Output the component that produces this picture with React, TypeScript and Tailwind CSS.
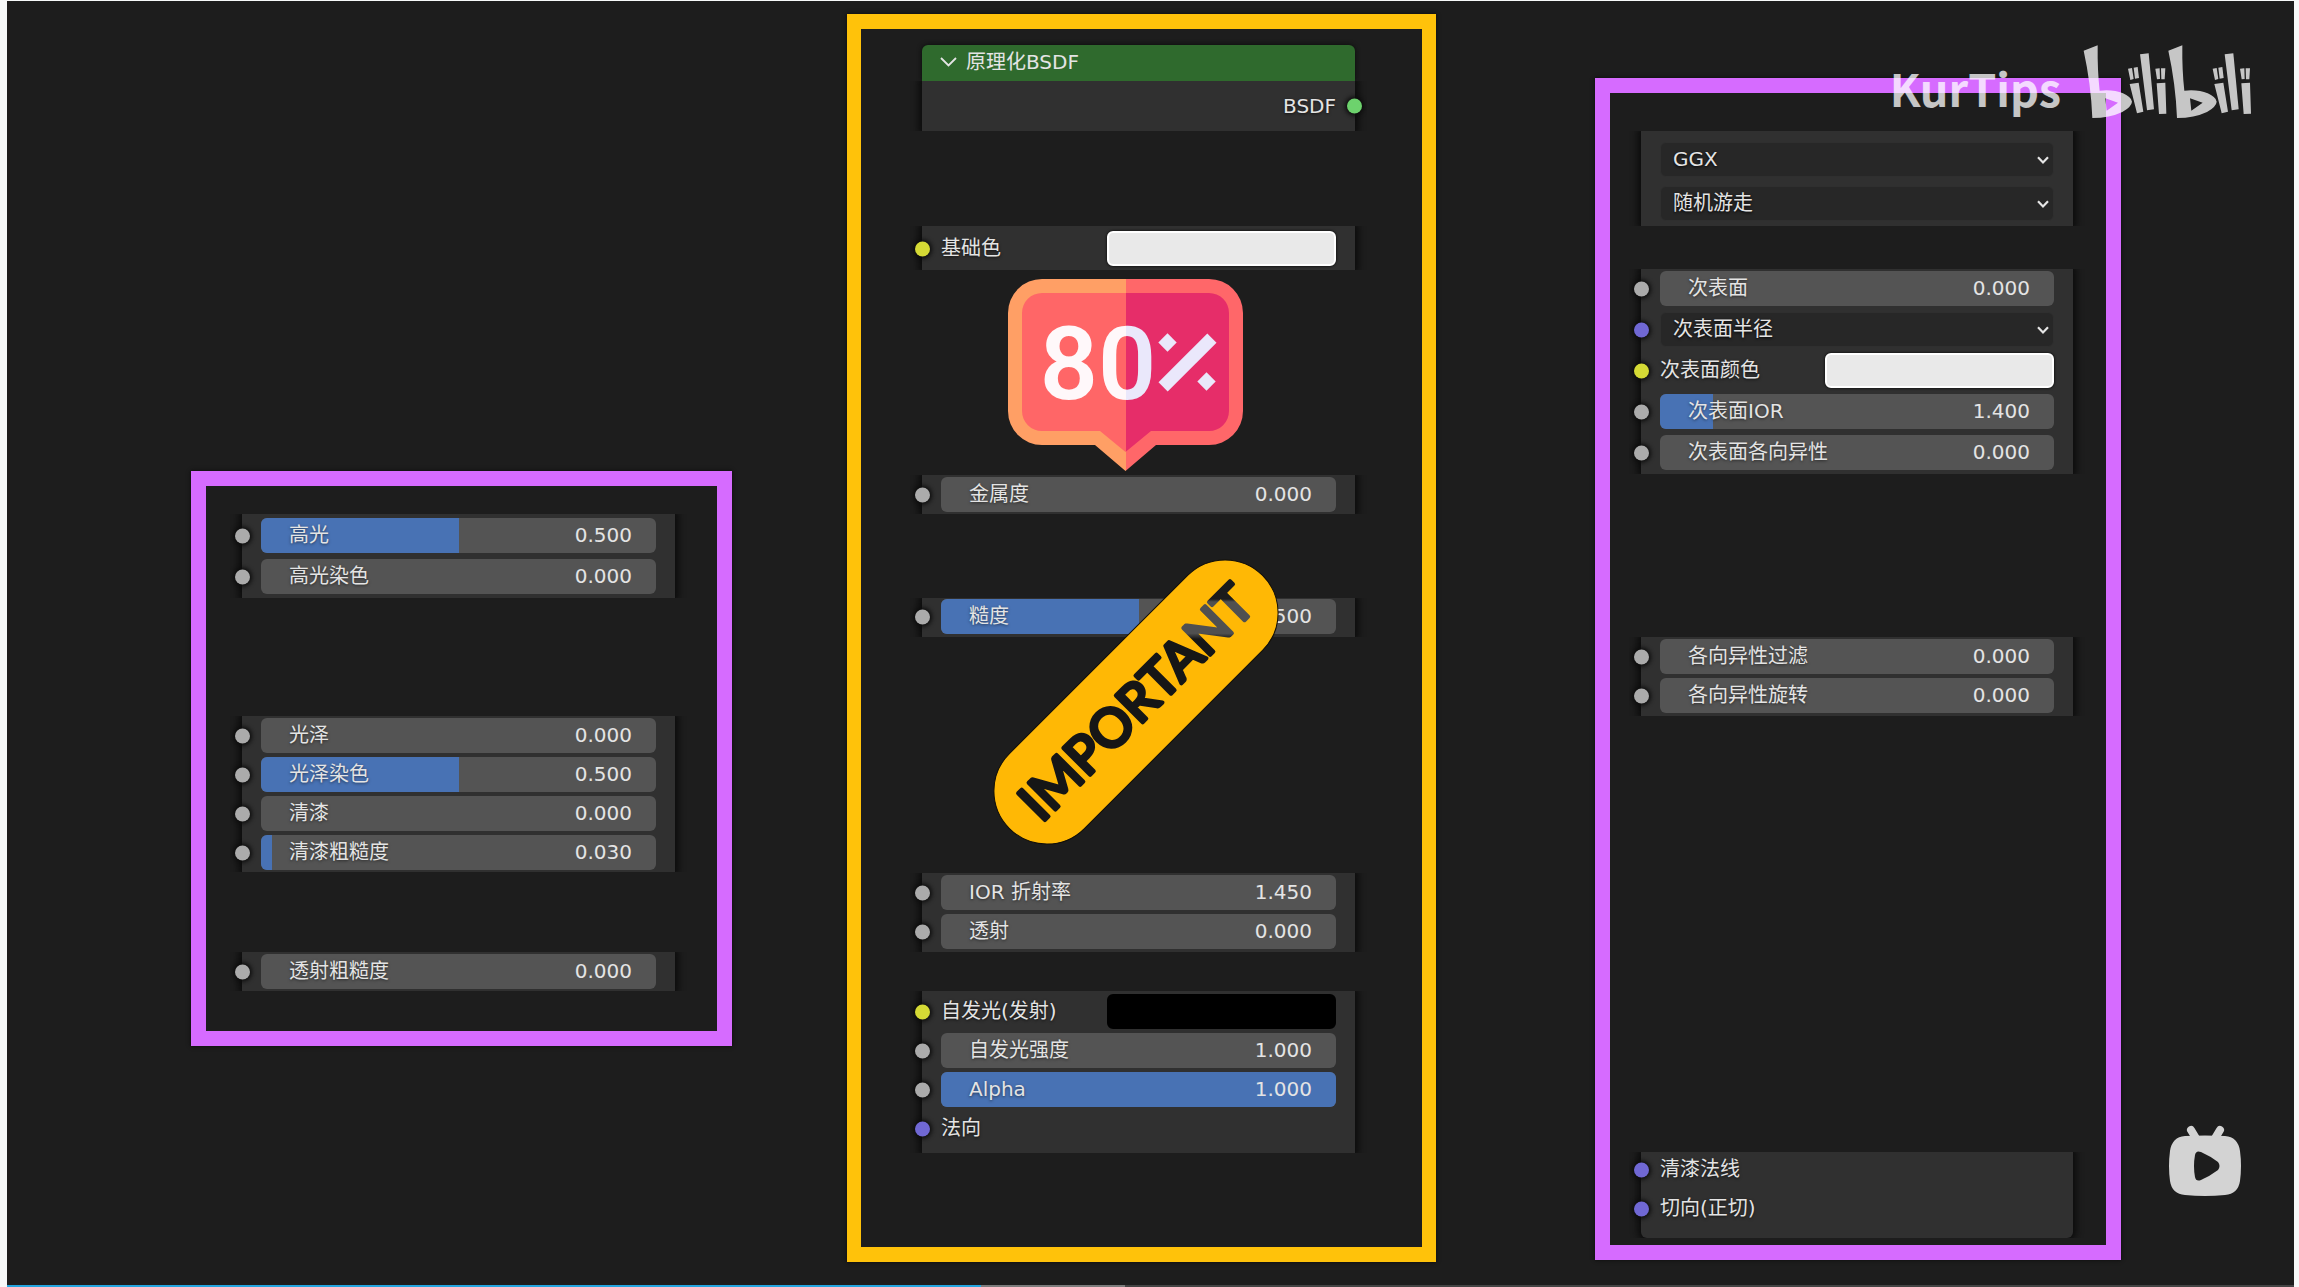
import { useId, useState } from "react";
import type { ReactNode } from "react";

const SOCKET = {
  float: "bg-[#ababab]",
  vector: "bg-[#7068d4]",
  color: "bg-[#d5da35]",
  shader: "bg-[#6dd26d]",
};

type SocketKind = keyof typeof SOCKET;

function Socket({ kind, side = "left" }: { kind: SocketKind; side?: "left" | "right" }) {
  return (
    <span
      className={`absolute top-1/2 size-[15px] -translate-y-1/2 rounded-full shadow-[0_0_4px_2px_#0d0d0d] ${
        side === "left" ? "-left-[26px]" : "-right-[26px]"
      } ${SOCKET[kind]}`}
    />
  );
}

function Row({ socket, children }: { socket?: SocketKind; children: ReactNode }) {
  return (
    <div className="relative flex h-[35px] items-center">
      {socket && <Socket kind={socket} />}
      {children}
    </div>
  );
}

function Slider({ label, value, fill = 0 }: { label: string; value: string; fill?: number }) {
  const id = useId();
  return (
    <Row socket="float">
      <div className="relative flex h-full w-full items-center justify-between overflow-hidden rounded-md bg-[#545454] pr-6 pb-0.5 pl-7">
        <div className="absolute inset-y-0 left-0 bg-[#4872b4]" style={{ width: `${fill}%` }} />
        <label htmlFor={id} className="relative leading-none [text-shadow:0_1px_3px_#0008]">
          {label}
        </label>
        <output htmlFor={id} className="relative leading-none">
          {value}
        </output>
        <input
          id={id}
          type="range"
          min={0}
          max={100}
          defaultValue={fill}
          className="absolute inset-0 h-full w-full cursor-ew-resize opacity-0"
        />
      </div>
    </Row>
  );
}

function ColorField({ label, color }: { label: string; color: string }) {
  const id = useId();
  const [value, setValue] = useState(color);
  const light = value !== "#000000";
  return (
    <Row socket="color">
      <label htmlFor={id} className="flex-1 pb-0.5 leading-none [text-shadow:0_1px_3px_#000a]">
        {label}
      </label>
      <div
        className={`relative h-full w-[58%] rounded-md border-2 ${light ? "border-white shadow-[0_0_3px_#000]" : "border-black"}`}
        style={{ backgroundColor: value }}
      >
        <input
          id={id}
          type="color"
          value={value}
          onChange={(e) => setValue(e.target.value)}
          className="absolute inset-0 h-full w-full opacity-0"
        />
      </div>
    </Row>
  );
}

function Select({ name, socket }: { name: string; socket?: SocketKind }) {
  return (
    <Row socket={socket}>
      <select
        aria-label={name}
        className="h-full w-full appearance-none rounded-md border border-[#2f2f2f] bg-[#272727] pb-0.5 pl-3 [text-shadow:0_1px_3px_#000]"
      >
        <option>{name}</option>
      </select>
      <svg viewBox="0 0 12 8" className="pointer-events-none absolute right-[5px] h-2 w-3">
        <path d="M1 1.2 6 6.4 11 1.2" fill="none" stroke="#e6e6e6" strokeWidth="2.2" />
      </svg>
    </Row>
  );
}

function Label({ text }: { text: string }) {
  return (
    <Row socket="vector">
      <span className="pb-0.5 leading-none [text-shadow:0_1px_3px_#000a]">{text}</span>
    </Row>
  );
}

function Panel({ className, children }: { className: string; children: ReactNode }) {
  return (
    <section className={`[clip-path:inset(0_-12px)] ${className}`}>
      <div className="flex h-full flex-col [gap:inherit]">{children}</div>
    </section>
  );
}

const PANEL = "bg-[#303030] px-[19px] shadow-[0_0_7px_3px_#0b0b0b]";

function DiscountSticker() {
  return (
    <svg viewBox="0 0 235 192" className="mt-[9px] ml-[86px] h-48 w-[235px]" role="img" aria-label="80%">
      <defs>
        <linearGradient id="rim" gradientUnits="userSpaceOnUse" x1="0" y1="0" x2="235" y2="0">
          <stop offset="0.5" stopColor="#ff9f65" />
          <stop offset="0.5" stopColor="#ff6769" />
        </linearGradient>
        <linearGradient id="face" gradientUnits="userSpaceOnUse" x1="0" y1="0" x2="235" y2="0">
          <stop offset="0.5" stopColor="#ff6667" />
          <stop offset="0.5" stopColor="#e62d69" />
        </linearGradient>
        <linearGradient id="digits" gradientUnits="userSpaceOnUse" x1="0" y1="0" x2="235" y2="0">
          <stop offset="0.5" stopColor="#fff8fa" />
          <stop offset="0.5" stopColor="#eae8fb" />
        </linearGradient>
      </defs>
      <path
        fill="url(#rim)"
        d="M34 0H201A34 34 0 0 1 235 34V132A34 34 0 0 1 201 166H148L117.500 192 87 166H34A34 34 0 0 1 0 132V34A34 34 0 0 1 34 0Z"
      />
      <path
        fill="url(#face)"
        d="M34 14H201A20 20 0 0 1 221 34V132A20 20 0 0 1 201 152H143L117.500 173 92 152H34A20 20 0 0 1 14 132V34A20 20 0 0 1 34 14Z"
      />
      <text
        x="90"
        y="120"
        textAnchor="middle"
        fill="url(#digits)"
        className="font-[Roboto,sans-serif] text-[102px] font-semibold"
      >
        80
      </text>
      <g fill="#eae8fb">
        <rect x="145" y="77" width="69" height="13" transform="rotate(-45 179.500 83.500)" />
        <rect x="153" y="57" width="13" height="13" transform="rotate(45 159.500 63.500)" />
        <rect x="192" y="96" width="13" height="13" transform="rotate(45 198.500 102.500)" />
      </g>
    </svg>
  );
}

function ImportantSticker() {
  return (
    <svg
      viewBox="0 0 286 286"
      className="pointer-events-none absolute -top-[39px] left-[71px] z-10 size-[286px]"
    >
      <defs>
        <linearGradient
          id="ink"
          gradientUnits="userSpaceOnUse"
          x1="0"
          y1="0"
          x2="0"
          y2="286"
          gradientTransform="rotate(45 143 143)"
        >
          <stop offset="0.14" stopColor="#1b1b1b" />
          <stop offset="0.15" stopColor="#505050" />
          <stop offset="0.26" stopColor="#505050" />
          <stop offset="0.28" stopColor="#161616" />
        </linearGradient>
      </defs>
      <g transform="rotate(-45 143 143)">
        <rect x="-36" y="90" width="358" height="106" rx="53" fill="#ffb805" stroke="#120f08" strokeWidth="1" />
        <text
          x="143"
          y="162"
          textAnchor="middle"
          fill="url(#ink)"
          stroke="url(#ink)"
          strokeWidth="4"
          strokeLinejoin="round"
          className="font-[Lato,sans-serif] text-[53px] font-normal"
        >
          IMPORTANT
        </text>
      </g>
    </svg>
  );
}

function BiliHalf({ x }: { x: number }) {
  return (
    <g transform={`translate(${x} 0)`}>
      <path
        fillRule="evenodd"
        d="M2 20 44 4Q43 80 50 140Q92 136 120 148Q146 160 147 173Q146 188 118 204Q80 222 28 222Q24 120 2 20ZM67 163 71 200 105 176Z"
      />
      <path d="M135 74 147 72 152 105 142 108ZM152 71 164 69 168 102 156 104ZM140 120 167 116 181 203 162 208Z" />
      <path d="M171 31 197 28 213 196 192 199Z" />
      <path d="M217 74 230 73 231 105 222 106ZM234 73 247 73 245 106 235 106ZM221 118 247 116 250 209 228 210Z" />
    </g>
  );
}

function Watermark() {
  return (
    <div className="absolute top-[43px] right-[41px] flex items-end gap-[22px] opacity-75">
      <span className="font-['Noto_Sans_CJK_SC',sans-serif] text-[45px] leading-[70px] font-bold text-white">KurTips</span>
      <svg viewBox="0 0 510 225" className="mb-1 h-[75px] w-[170px]" fill="#fff" role="img" aria-label="bilibili">
        <BiliHalf x={0} />
        <BiliHalf x={254} />
      </svg>
    </div>
  );
}

function PlayButton() {
  return (
    <button type="button" aria-label="播放" className="absolute right-[52px] bottom-[90px]">
      <svg viewBox="0 0 74 72" className="h-[72px] w-[74px]">
        <path d="M23 5 29 15M52 5 46 15" stroke="#d3d3d3" strokeWidth="8" strokeLinecap="round" />
        <path
          fill="#d3d3d3"
          fillRule="evenodd"
          d="M17 11Q37 10 57 11Q70 12 72 26Q74 41 72 56Q70 69 57 70Q37 72 17 70Q4 69 2 56Q0 41 2 26Q4 12 17 11ZM27 30Q25 41 27 52Q28 57 33 55Q42 51 50 45Q53 41 50 37Q42 31 33 27Q28 25 27 30Z"
        />
      </svg>
    </button>
  );
}

export default function App() {
  return (
    <div className="flex min-h-screen bg-[#f7f9f9] pt-px pr-[5px] pl-[7px]">
      <main className="relative flex w-full flex-col overflow-hidden bg-[#1d1d1d] font-['DejaVu_Sans','Noto_Sans_CJK_SC',sans-serif] text-xl text-[#e4e4e4]">
        <div className="grid flex-1 grid-cols-[184fr_541fr_115fr_589fr_159fr_526fr_173fr] items-start">
          <div className="col-start-2 mt-[470px] border-[15px] border-[#d66bff] pt-7 pr-[42px] pb-10 pl-9 shadow-[0_0_4px_#0a0a0a]">
            <Panel className={`gap-1.5 py-1 ${PANEL}`}>
              <Slider label="高光" value="0.500" fill={50} />
              <Slider label="高光染色" value="0.000" />
            </Panel>
            <Panel className={`mt-[118px] gap-1 py-0.5 ${PANEL}`}>
              <Slider label="光泽" value="0.000" />
              <Slider label="光泽染色" value="0.500" fill={50} />
              <Slider label="清漆" value="0.000" />
              <Slider label="清漆粗糙度" value="0.030" fill={2.7} />
            </Panel>
            <Panel className={`mt-20 py-0.5 ${PANEL}`}>
              <Slider label="透射粗糙度" value="0.000" />
            </Panel>
          </div>

          <div className="col-start-4 mt-[13px] border-x-[14px] border-y-[15px] border-[#ffc20a] pt-4 pr-[67px] pb-[94px] pl-[61px] shadow-[0_0_4px_#0a0a0a]">
            <section>
              <header className="flex h-9 items-center rounded-t-md bg-[#2f6a2d] pb-0.5 shadow-[0_0_5px_#0b0b0b]">
                <button type="button" className="flex items-center gap-[9px] pl-[18px] leading-none">
                  <svg viewBox="0 0 17 10" className="h-[10px] w-[17px]">
                    <path d="M1 1 8.500 8.500 16 1" fill="none" stroke="#e4e4e4" strokeWidth="1.8" />
                  </svg>
                  原理化BSDF
                </button>
              </header>
              <div className="relative h-[50px] bg-[#303030] px-[19px] shadow-[0_0_7px_3px_#0b0b0b] [clip-path:inset(0_-12px)]">
                <div className="relative flex h-full items-center justify-end">
                  <span className="leading-none [text-shadow:0_1px_3px_#000a]">BSDF</span>
                  <Socket kind="shader" side="right" />
                </div>
              </div>
            </section>
            <Panel className={`mt-[95px] pt-[5px] pb-1 ${PANEL}`}>
              <ColorField label="基础色" color="#e9e9e9" />
            </Panel>
            <DiscountSticker />
            <Panel className={`mt-1 pt-0.5 pb-0.5 ${PANEL}`}>
              <Slider label="金属度" value="0.000" />
            </Panel>
            <div className="relative mt-[84px]">
              <Panel className={`pt-px pb-[3px] ${PANEL}`}>
                <Slider label="糙度" value="0.500" fill={50} />
              </Panel>
              <ImportantSticker />
            </div>
            <Panel className={`mt-[236px] gap-1 pt-0.5 pb-[3px] ${PANEL}`}>
              <Slider label="IOR 折射率" value="1.450" />
              <Slider label="透射" value="0.000" />
            </Panel>
            <Panel className={`mt-[39px] gap-1 pt-[3px] pb-[7px] ${PANEL}`}>
              <ColorField label="自发光(发射)" color="#000000" />
              <Slider label="自发光强度" value="1.000" />
              <Slider label="Alpha" value="1.000" fill={100} />
              <Label text="法向" />
            </Panel>
          </div>

          <div className="col-start-6 mt-[77px] border-[15px] border-[#d66bff] pt-[38px] pr-[33px] pb-[7px] pl-[31px] shadow-[0_0_4px_#0a0a0a]">
            <Panel className={`gap-[9px] pt-[11px] pb-[5px] ${PANEL}`}>
              <Select name="GGX" />
              <Select name="随机游走" />
            </Panel>
            <Panel className={`mt-[43px] gap-1.5 pt-0.5 pb-1 ${PANEL}`}>
              <Slider label="次表面" value="0.000" />
              <Select name="次表面半径" socket="vector" />
              <ColorField label="次表面颜色" color="#e9e9e9" />
              <Slider label="次表面IOR" value="1.400" fill={13.5} />
              <Slider label="次表面各向异性" value="0.000" />
            </Panel>
            <Panel className={`mt-[163px] gap-1 pt-0.5 pb-[3px] ${PANEL}`}>
              <Slider label="各向异性过滤" value="0.000" />
              <Slider label="各向异性旋转" value="0.000" />
            </Panel>
            <Panel className={`mt-[436px] gap-1 rounded-b-md pb-3 ${PANEL}`}>
              <Label text="清漆法线" />
              <Label text="切向(正切)" />
            </Panel>
          </div>
        </div>

        <Watermark />
        <PlayButton />

        <div className="absolute inset-x-0 bottom-0 flex h-0.5 bg-[#444]">
          <div className="w-[42.6%] bg-[#23a5e0]" />
          <div className="w-[6.3%] bg-[#7c7c7c]" />
        </div>
      </main>
    </div>
  );
}
